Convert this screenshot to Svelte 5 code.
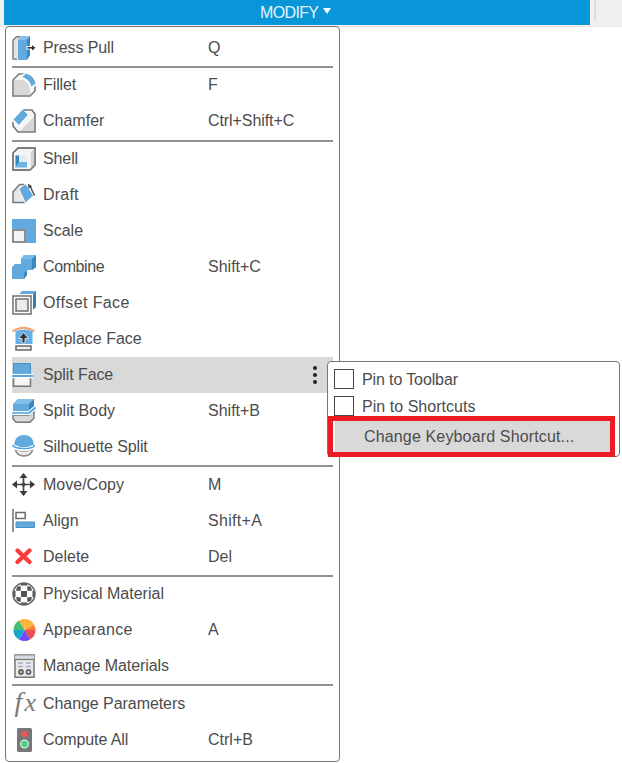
<script>
  const groups = [
    [{ icon: 'press', label: 'Press Pull', key: 'Q', track: -0.1 }],
    [
      { icon: 'fillet', label: 'Fillet', key: 'F', track: -0.1 },
      { icon: 'chamfer', label: 'Chamfer', key: 'Ctrl+Shift+C', keyTrack: -0.08 }
    ],
    [
      { icon: 'shell', label: 'Shell', track: -0.1 },
      { icon: 'draft', label: 'Draft', track: 0.2 },
      { icon: 'scale', label: 'Scale' },
      { icon: 'combine', label: 'Combine', key: 'Shift+C', track: -0.4 },
      { icon: 'offset', label: 'Offset Face', track: 0.4 },
      { icon: 'replace', label: 'Replace Face' },
      { icon: 'splitface', label: 'Split Face', track: -0.1, active: true },
      { icon: 'splitbody', label: 'Split Body', key: 'Shift+B', track: 0 },
      { icon: 'silhouette', label: 'Silhouette Split', track: -0.13 }
    ],
    [
      { icon: 'move', label: 'Move/Copy', key: 'M' },
      { icon: 'align', label: 'Align', key: 'Shift+A', keyTrack: 0.3 },
      { icon: 'delete', label: 'Delete', key: 'Del' }
    ],
    [
      { icon: 'material', label: 'Physical Material', track: 0 },
      { icon: 'appearance', label: 'Appearance', key: 'A', track: 0.35 },
      { icon: 'manage', label: 'Manage Materials', track: -0.08 }
    ],
    [
      { icon: 'fx', label: 'Change Parameters', track: -0.06 },
      { icon: 'compute', label: 'Compute All', key: 'Ctrl+B', track: -0.1 }
    ]
  ];
</script>

{#snippet glyph(name)}
  <svg class="icon" viewBox="0 0 24 24" width="24" height="24" fill="none">
    {#if name === 'press'}
      <path d="M5 1.500 8 .7V22H4.500Q1 22 1 19V6Q1 3 5 1Z" fill="#e4e4e4" />
      <path d="M8 .8H5.500Q4 .8 1 4.500V23H5" stroke="#777" stroke-width="1.400" />
      <path d="M6 4 9 0H18V19L14.500 24H6Z" fill="#62aade" />
      <path d="M6 4 9 0H18L15 4Z" fill="#86c1ec" />
      <path d="M15 4 18 0V19L15 24Z" fill="#3789bf" />
      <path d="M14.500 10H20V13.500H14.500Z" fill="#fff" />
      <path d="M15.500 11.800H21" stroke="#333" stroke-width="1.600" />
      <path d="m20 9.200 3.500 2.600-3.500 2.600Z" fill="#333" />
    {:else if name === 'fillet'}
      <path d="M1 7 7 1H13Q23 4 23 14V18L18 23H1Z" fill="#f6f6f6" stroke="#777" stroke-width="1.500" />
      <path d="M2 7H10Q17 9 18 16V22H2Z" fill="#d8d8d8" />
      <path d="M10 1.500 13 0Q22 1 24 12.500L19 16Q17 8 9 5Z" fill="#fff" />
      <path d="M11 3 14 .7Q22 2.500 23.500 10.500L19.500 13.500Q17.500 6.500 10.500 4Z" fill="#62aade" />
    {:else if name === 'chamfer'}
      <path d="M1 13 12 1H20L23 5V23H6L1 17Z" fill="#f5f5f5" stroke="#777" stroke-width="1.600" />
      <path d="M8 22 22 8V22Z" fill="#d6d6d6" />
      <path d="M0 12 9 0 17.500 5.500 6.500 18Z" fill="#fff" />
      <path d="M1.500 10.500 10.500 .8 16 5.800 6.800 16Z" fill="#62aade" />
    {:else if name === 'shell'}
      <path d="M1 6 6 1H23V18L18 23H1Z" fill="#f4f4f4" stroke="#777" stroke-width="1.500" />
      <path d="M18 6 23 1V18L18 23Z" fill="#d2d2d2" />
      <path d="M1.500 6H18V23" stroke="#f7f7f7" stroke-width="1.500" />
      <path d="M3.500 8.500H15V20.500H3.500Z" fill="#e3edf5" />
      <path d="M3.500 8.500H7V16L3.500 20.500Z" fill="#3686bb" />
      <path d="M7 15H15V20.500H3.500Z" fill="#6db3e4" />
      <path d="M1 6V23H18L23 18V1H6Z" stroke="#777" stroke-width="1.500" />
    {:else if name === 'draft'}
      <path d="M1 9 6 3 12 2 9 5 13 19.500H1Z" fill="#e7e7e7" />
      <path d="M13 19.500H1V9L6 3 8 1.500H12" stroke="#777" stroke-width="1.500" />
      <path d="M7 6 14 0 22 14 13.500 22Z" fill="#fff" />
      <path d="M7.500 6 13.500 1 21 12.500 13.500 19.500Z" fill="#62aade" />
      <path d="M17.500 2 22.500 12.500" stroke="#555" stroke-width="1.600" />
      <path d="m16 .5 4 3-3.500 2Z" fill="#444" />
    {:else if name === 'scale'}
      <path d="M0 0H24V24H14V10H0Z" fill="#62aade" />
      <path d="M1 11H13V23H1Z" fill="#f4f4f4" stroke="#6b6b6b" stroke-width="1.500" />
    {:else if name === 'combine'}
      <path d="M0 12 3 9H9V4L12 0H24V12L20 15H15V20L12 24H0Z" fill="#62aade" />
      <path d="M9 4 12 0H24L20 4Z" fill="#77baea" />
      <path d="M20 4 24 0V12L20 15ZM12 18 15 15V20L12 24Z" fill="#3789bf" />
    {:else if name === 'offset'}
      <path d="M6 4.500 10 0H24V16L20.500 19V4.500Z" fill="#62aade" />
      <path d="M20.500 4.500 24 0V16L20.500 19Z" fill="#347faf" />
      <path d="M1 5H19V23H1Z" fill="#fff" stroke="#fff" stroke-width="4" />
      <path d="M1 5H19V23H1Z" fill="#fff" stroke="#707070" stroke-width="1.500" />
      <path d="M4 8H16V20H4Z" fill="#ececec" stroke="#707070" stroke-width="1.500" />
    {:else if name === 'replace'}
      <path d="M3.500 4Q12 1 20.500 4V17H3.500Z" fill="#65b1e5" />
      <path d="M.5 4.500Q11.500-3 22.500 4.500" stroke="#f3a277" stroke-width="1.800" />
      <path d="M4 19H19V23H4Z" fill="#eee" stroke="#686868" stroke-width="1.500" />
      <path d="m11.500 5.500 5 6H13V16H10V11.500H6.500Z" fill="#333" stroke="#e3f2fb" stroke-width=".8" />
    {:else if name === 'splitface'}
      <path d="M1.500 .5H18.500V11H1.500Z" fill="#62aade" stroke="#438fbf" />
      <path d="M1.500 14V23.200H18.500V14" fill="#f5f5f5" stroke="#777" stroke-width="1.500" />
      <path d="M0 13H21" stroke="#fff" stroke-width="4.400" />
      <path d="M0 13H21" stroke="#3e96d2" stroke-width="1.700" />
    {:else if name === 'splitbody'}
      <path d="M1 16H17L22 11V19L18 23.200H4L1 20Z" fill="#d9d9d9" stroke="#777" stroke-width="1.400" />
      <path d="M1 5 6 0H22V8L17 12H1Z" fill="#62aade" />
      <path d="M1 5 6 0H22L17 5Z" fill="#7fc0ed" />
      <path d="M17 5 22 0V8L17 12Z" fill="#3789bf" />
      <path d="M0 14H17L24 8" stroke="#fff" stroke-width="4" />
      <path d="M0 14H17L23.500 8.500" stroke="#45a2df" stroke-width="1.700" />
    {:else if name === 'silhouette'}
      <path d="M2 9.500Q3 0 12 0T22 9.500Q12 15 2 9.500" fill="#62aade" />
      <path d="M3 14Q5 21 12 21T21 14Q12 18 3 14" fill="#ececec" stroke="#888" stroke-width="1.400" />
      <path d="M.5 10.500Q2 14 12 14T23 10.500" stroke="#fff" stroke-width="4" />
      <path d="M.5 10Q2 13.500 12 13.500T22.500 10" stroke="#45a2df" stroke-width="1.600" />
    {:else if name === 'move'}
      <path d="M1 11.500H22M11.500 1V22" stroke="#444" stroke-width="1.700" />
      <path d="m11.500 0 4 5h-8ZM11.500 23l4-5h-8ZM0 11.500l5-4v8ZM23 11.500l-5-4v8Z" fill="#3c3c3c" />
      <circle cx="11.500" cy="11.500" r="2" fill="#444" />
    {:else if name === 'align'}
      <path d="M1 0V23" stroke="#6b6b6b" stroke-width="1.500" />
      <path d="M4 3.500H13.200V9.500H4Z" stroke="#6b6b6b" stroke-width="1.500" />
      <path d="M4 13H22.500V18.500H4Z" fill="#62aade" stroke="#438fbf" />
    {:else if name === 'delete'}
      <path d="M5.500 5.500 17.500 17M17.500 5.500 5.500 17" stroke="#f93d3b" stroke-width="4.400" stroke-linecap="round" />
    {:else if name === 'material'}
      <circle cx="12" cy="12" r="11" fill="#fff" stroke="#6c6c6c" stroke-width="1.600" />
      <g fill="#555">
        <path d="M9 9H15V15H9ZM9 1.500H15L15.300 3.500H8.700ZM8.700 20.500H15.300L15 22.500H9ZM1.500 9 3.500 8.700V15.300L1.500 15ZM20.500 8.700 22.500 9V15L20.500 15.300Z" />
        <path d="M5 5 8.700 4V8.700H4ZM15.300 4 19 5 20 8.700H15.300ZM4 15.300H8.700V20L5 19ZM15.300 15.300H20L19 19 15.300 20Z" />
      </g>
    {:else if name === 'appearance'}
      <path d="M12.500 12V1A11 11 0 0 1 22 6.500Z" fill="#ffb52f" />
      <path d="M12.500 12 22 6.500A11 11 0 0 1 23.500 12Z" fill="#fb8139" />
      <path d="M12.500 12H23.500A11 11 0 0 1 18 21.500Z" fill="#eb4e55" />
      <path d="M12.500 12 18 21.500A11 11 0 0 1 7 21.500Z" fill="#7548f5" />
      <path d="M12.500 12 7 21.500A11 11 0 0 1 1.500 12Z" fill="#12a9c6" />
      <path d="M12.500 12H1.500A11 11 0 0 1 7 2.500Z" fill="#43be77" />
      <path d="M12.500 12 7 2.500A11 11 0 0 1 12.500 1Z" fill="#ffad32" />
    {:else if name === 'manage'}
      <path d="M3 1H22V23.300H3Z" fill="#e9eaec" stroke="#777" stroke-width="1.500" />
      <path d="M3 1.500H22V5H3Z" fill="#d4dae3" />
      <path d="M2.500 5.500H22.500" stroke="#777" stroke-width="1.200" />
      <path d="M6 9H11M14 9H19M6 12.500H11M14 12.500H19" stroke="#a5acb9" stroke-width="1.300" />
      <circle cx="9" cy="18" r="2.100" fill="#e1b13d" stroke="#60636c" stroke-width="1.600" />
      <circle cx="16.500" cy="18" r="2.100" fill="#d2d5da" stroke="#60636c" stroke-width="1.600" />
    {:else if name === 'fx'}
      <text x="2.500" y="18.500" class="fx f">f</text>
      <text x="12.500" y="18.500" class="fx">x</text>
    {:else if name === 'compute'}
      <rect x="5" y="0" width="15" height="24" rx="1.500" fill="#777" />
      <circle cx="12.500" cy="6" r="3" fill="#ef5657" />
      <circle cx="12.500" cy="16" r="3.900" fill="#52cf82" stroke="#d7eddf" stroke-width="1.300" />
    {/if}
  </svg>
{/snippet}

<div class="screen">
  <header>
    <div class="ribbon"><span>MODIFY</span><i class="caret"></i></div>
    <i class="divider"></i>
  </header>
  <main>
    <div class="menu">
      {#each groups as group}
        <section>
          {#each group as item}
            <div class="row" class:active={item.active}>
              {@render glyph(item.icon)}
              <span class="label" style:letter-spacing="{item.track ?? 0}px">{item.label}</span>
              <span class="key" style:letter-spacing="{item.keyTrack ?? 0}px">{item.key ?? ''}</span>
              {#if item.active}
                <span class="dots"><i></i><i></i><i></i></span>
              {/if}
            </div>
          {/each}
        </section>
      {/each}
    </div>
    <div class="submenu">
      <div class="option tight"><i class="box"></i>Pin to Toolbar</div>
      <div class="option"><i class="box"></i>Pin to Shortcuts</div>
      <div class="change">Change Keyboard Shortcut...</div>
    </div>
  </main>
</div>

<style>
  :global(body) { background: #fff; overflow: hidden; }
  .screen {
    width: 622px;
    height: 763px;
    overflow: hidden;
    box-sizing: border-box;
    font: 16px/20px "Liberation Sans", Arial, sans-serif;
    color: #4c4c4c;
    background: #fff;
  }
  header {
    display: flex;
    height: 27px;
    box-sizing: border-box;
    padding-left: 4px;
    background: #f0f0f0;
    border-bottom: 1px solid #e6e6e6;
  }
  .ribbon {
    display: flex;
    width: 586px;
    height: 25px;
    box-sizing: border-box;
    padding: 3px 0 0 256px;
    background: #0996d8;
    color: #e2f4fc;
  }
  .ribbon span { width: 58px; letter-spacing: -.65px; }
  .caret {
    height: 0;
    margin: 5px 0 0 5px;
    border: 4.5px solid transparent;
    border-top: 6px solid #f5fbff;
    border-bottom: 0;
  }
  .divider { width: 2px; height: 21px; margin-left: 4px; background: #dedede; }
  main { position: relative; margin-top: -1px; }
  .menu {
    width: 335px;
    height: 736px;
    box-sizing: border-box;
    margin-left: 5px;
    padding: 2.9px 6px 0 6px;
    border: 1.5px solid #777;
    border-radius: 4px;
    background: #fff;
  }
  section + section { margin-top: 1.6px; position: relative; }
  section + section::before {
    content: "";
    position: absolute;
    top: -1.5px;
    left: 0;
    right: 0;
    height: 2px;
    background: #919191;
  }
  .row { display: flex; align-items: center; height: 36px; }
  .active { background: #d9d9d9; }
  .icon { flex: none; overflow: visible; }
  .label { width: 165px; margin-left: 7px; white-space: nowrap; }
  .key { width: 100px; white-space: nowrap; }
  .dots { display: flex; flex-direction: column; gap: 3px; margin-left: 5px; }
  .dots i { width: 4px; height: 4px; border-radius: 50%; background: #222; }
  .fx { font: italic 26px "Liberation Serif", serif; fill: #7a7a7a; }
  .f { font-size: 28px; }
  .submenu {
    position: absolute;
    left: 327px;
    top: 335px;
    width: 293px;
    height: 96px;
    box-sizing: border-box;
    padding: 4px 0 0 6px;
    border: 1.5px solid #777;
    border-radius: 4px;
    background: #fff;
  }
  .option { display: flex; align-items: center; height: 27px; letter-spacing: .04px; }
  .tight { letter-spacing: -.12px; }
  .box {
    width: 20px;
    height: 20px;
    box-sizing: border-box;
    margin: 0 8px 2px 0;
    border: 1.5px solid #484848;
  }
  .change {
    position: absolute;
    left: 0;
    top: 54px;
    width: 287px;
    height: 41px;
    box-sizing: border-box;
    padding: 6px 0 0 31px;
    border: 5px solid #ed1c24;
    background: #d9d9d9;
    box-shadow: inset 2px 0 #fff;
    letter-spacing: .15px;
    white-space: nowrap;
  }
</style>
